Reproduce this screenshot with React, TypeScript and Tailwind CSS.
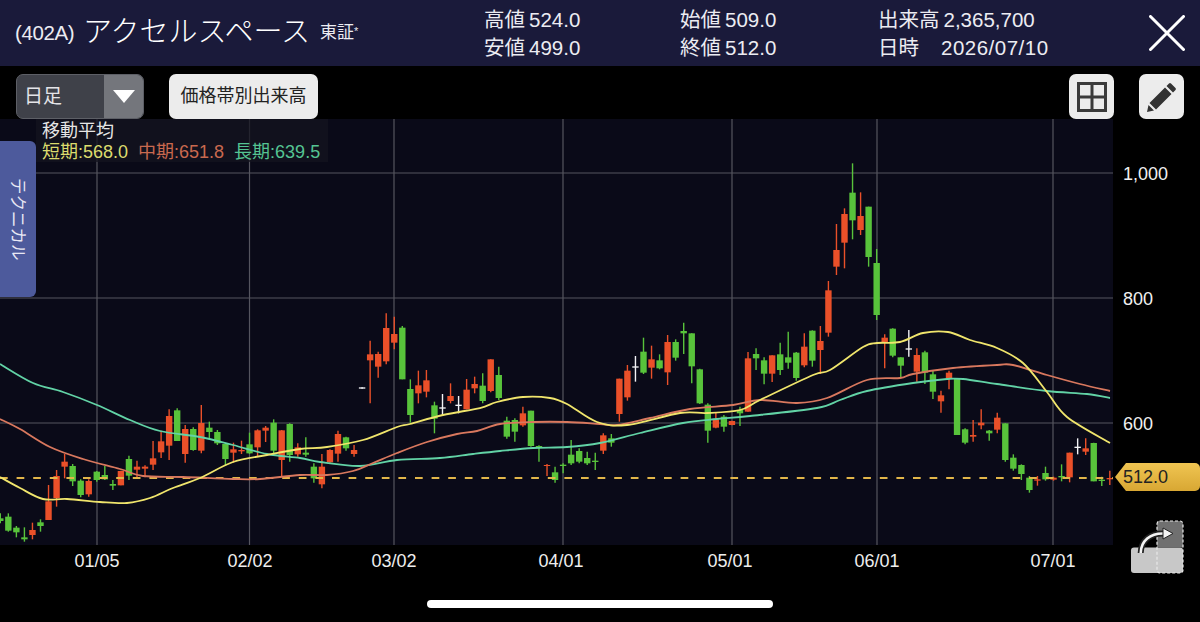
const JP = "font-['Liberation_Sans','Noto_Sans_CJK_JP',sans-serif]";

// [wickTop, bodyTop, bodyBottom, wickBottom, color] in screen px, one entry per trading day
type Candle = [number, number, number, number, "r" | "g" | "w"];

// read off the three chart sections with y = base + z / 3
const z3 = (a: number, b: number, c: number, d: number, k: "r" | "g" | "w"): Candle => [340 + a / 3, 340 + b / 3, 340 + c / 3, 340 + d / 3, k];
const z4 = (a: number, b: number, c: number, d: number, k: "r" | "g" | "w"): Candle => [300 + a / 3, 300 + b / 3, 300 + c / 3, 300 + d / 3, k];
const z5 = (a: number, b: number, c: number, d: number, k: "r" | "g" | "w"): Candle => [150 + a / 3, 150 + b / 3, 150 + c / 3, 150 + d / 3, k];
const z6 = (a: number, b: number, c: number, d: number, k: "r" | "g" | "w"): Candle => [320 + a / 3, 320 + b / 3, 320 + c / 3, 320 + d / 3, k];

const candles: Candle[] = [
  z3(520, 535, 543, 550, "g"), z3(520, 530, 572, 575, "g"), z3(558, 563, 577, 592, "g"), z3(562, 592, 598, 605, "g"),
  z3(548, 570, 585, 598, "r"), z3(538, 547, 558, 575, "g"), z3(435, 484, 540, 540, "r"), z3(390, 408, 474, 500, "r"),
  z3(342, 365, 380, 415, "r"), z3(372, 378, 424, 438, "g"), z3(418, 422, 465, 472, "g"), z3(418, 423, 463, 470, "r"),
  z3(393, 395, 420, 425, "g"), z3(378, 405, 418, 420, "g"), z3(420, 432, 437, 450, "g"), z3(392, 393, 436, 436, "r"),
  z3(347, 357, 407, 420, "g"), z3(362, 380, 389, 412, "r"), z3(376, 380, 386, 412, "r"), z3(303, 355, 374, 390, "r"),
  z3(272, 304, 337, 354, "r"), z3(208, 228, 317, 360, "r"), z3(205, 211, 303, 303, "g"), z3(255, 267, 342, 368, "r"),
  z3(262, 267, 330, 332, "g"), z3(195, 249, 332, 340, "r"), z3(245, 263, 276, 298, "g"), z3(270, 276, 310, 315, "g"),
  z3(310, 312, 357, 378, "g"), z3(308, 328, 338, 368, "r"), z3(302, 330, 334, 342, "r"), z3(278, 313, 340, 342, "g"),
  z3(268, 271, 322, 348, "r"), z3(258, 263, 272, 306, "r"), z3(238, 248, 332, 340, "g"), z3(270, 271, 360, 410, "r"),
  z3(250, 252, 345, 365, "g"), z3(310, 322, 343, 350, "r"),
  z4(412, 458, 464, 470, "g"), z4(490, 500, 535, 548, "g"), z4(462, 500, 553, 565, "r"), z4(448, 450, 487, 488, "r"),
  z4(392, 402, 461, 485, "r"), z4(410, 412, 445, 452, "g"), z4(435, 450, 462, 470, "r"), z4(262, 262, 266, 266, "w"),
  z4(122, 163, 181, 310, "r"), z4(155, 162, 200, 233, "r"), z4(40, 84, 184, 193, "r"), z4(50, 102, 128, 148, "r"),
  z4(78, 83, 238, 238, "g"), z4(238, 267, 345, 368, "g"), z4(212, 256, 280, 310, "r"), z4(210, 241, 275, 292, "r"),
  z4(305, 316, 356, 400, "g"), z4(282, 322, 326, 348, "w"), z4(250, 288, 303, 310, "r"), z4(288, 314, 318, 340, "w"),
  z4(237, 269, 328, 328, "r"), z4(230, 252, 265, 280, "r"), z4(220, 257, 303, 310, "g"), z4(178, 178, 273, 277, "r"),
  z4(200, 225, 294, 300, "g"), z4(350, 362, 410, 416, "g"), z4(355, 360, 395, 425, "g"), z4(320, 340, 376, 380, "r"),
  z4(332, 332, 438, 440, "g"), z4(436, 438, 442, 485, "g"), z4(492, 495, 498, 528, "r"), z4(500, 517, 540, 548, "g"),
  z4(490, 494, 498, 520, "g"), z4(420, 464, 490, 495, "g"), z4(445, 453, 485, 490, "g"), z4(455, 474, 490, 495, "g"),
  z4(458, 482, 486, 510, "g"),
  z5(850, 856, 902, 912, "r"), z5(852, 865, 878, 890, "g"), z5(686, 686, 792, 815, "r"), z5(645, 662, 742, 752, "r"),
  z5(618, 649, 653, 695, "w"), z5(563, 605, 668, 672, "g"), z5(587, 628, 653, 686, "r"), z5(613, 631, 655, 658, "g"),
  z5(555, 576, 667, 705, "r"), z5(568, 576, 623, 632, "g"), z5(518, 543, 550, 612, "g"), z5(550, 550, 649, 700, "g"),
  z5(656, 658, 760, 762, "g"), z5(760, 764, 842, 878, "g"), z5(788, 808, 833, 835, "r"), z5(795, 800, 830, 845, "g"),
  z5(812, 813, 825, 826, "r"), z5(770, 780, 790, 828, "g"), z5(606, 625, 785, 785, "r"), z5(595, 612, 625, 660, "g"),
  z5(622, 631, 671, 703, "g"), z5(616, 616, 671, 696, "r"), z5(578, 613, 660, 675, "g"), z5(545, 622, 638, 656, "g"),
  z5(606, 608, 684, 692, "g"), z5(550, 590, 646, 652, "r"), z5(541, 542, 632, 650, "g"), z5(528, 573, 600, 672, "r"),
  z5(393, 421, 548, 560, "r"), z5(222, 300, 350, 375, "r"), z5(175, 192, 278, 355, "r"), z5(40, 128, 211, 268, "g"),
  z5(127, 198, 240, 255, "r"), z5(170, 170, 321, 350, "g"), z5(297, 339, 495, 510, "g"), z5(553, 563, 578, 655, "r"),
  z5(535, 536, 617, 622, "g"),
  z6(112, 112, 137, 175, "g"), z6(30, 85, 89, 110, "w"), z6(85, 105, 155, 185, "r"), z6(92, 97, 158, 192, "g"),
  z6(150, 163, 215, 237, "g"), z6(212, 226, 244, 278, "r"), z6(152, 158, 175, 208, "r"), z6(177, 177, 345, 345, "g"),
  z6(325, 328, 368, 373, "g"), z6(300, 345, 350, 365, "r"), z6(268, 308, 316, 328, "r"), z6(330, 332, 340, 362, "g"),
  z6(278, 293, 329, 340, "r"), z6(310, 310, 420, 425, "g"), z6(403, 413, 446, 452, "g"), z6(433, 435, 462, 480, "g"),
  z6(468, 473, 510, 518, "g"), z6(468, 478, 482, 497, "r"), z6(440, 459, 478, 482, "g"), z6(470, 473, 479, 482, "r"),
  z6(433, 468, 472, 484, "g"), z6(398, 398, 472, 487, "r"), z6(355, 380, 384, 403, "w"), z6(355, 385, 395, 405, "r"),
  z6(368, 369, 484, 484, "g"), z6(470, 479, 483, 498, "g"), z6(452, 474, 478, 495, "r"),
];

const candleColor = { r: "#ea5029", g: "#58c33b", w: "#f2f2f5" };

const longMa = [[0,364],[33,383],[63,392],[97,405],[130,420],[160,431],[200,437],[233,445],[267,454],[300,458],[320,462],[360,466],[397,460],[440,458],[473,454],[500,451],[533,448],[567,447],[600,443],[640,433],[683,423],[717,419],[750,416],[817,408],[840,400],[867,391],[913,383],[947,379],[963,379],[997,384],[1047,391],[1087,394],[1110,398]];
const midMa = [[0,419],[20,429],[50,447],[83,459],[120,469],[143,476],[183,477],[233,479],[260,479],[300,475],[327,475],[353,471],[373,463],[397,453],[427,442],[457,434],[477,431],[500,424],[533,422],[567,422],[600,424],[617,425],[650,418],[690,409],[733,405],[760,400],[797,403],[827,398],[867,380],[900,378],[913,374],[953,368],[997,365],[1013,365],[1047,375],[1080,384],[1110,391]];
const shortMa = [[0,477],[20,488],[43,499],[67,499],[100,502],[127,503],[150,498],[173,488],[200,478],[233,462],[267,455],[300,449],[327,447],[363,440],[397,427],[410,424],[443,415],[480,408],[497,402],[523,397],[550,398],[567,404],[597,422],[627,425],[680,413],[707,413],[740,410],[760,400],[813,375],[830,370],[863,347],[877,343],[900,342],[923,333],[948,332],[970,340],[997,348],[1023,363],[1047,392],[1067,417],[1110,443]];

// catmull-rom through the read-off points so the averages stay round
function smooth(pts: number[][]) {
  let d = `M${pts[0][0]} ${pts[0][1]}`;
  for (let i = 0; i < pts.length - 1; i++) {
    const p0 = pts[Math.max(i - 1, 0)];
    const p1 = pts[i];
    const p2 = pts[i + 1];
    const p3 = pts[Math.min(i + 2, pts.length - 1)];
    const c1x = p1[0] + (p2[0] - p0[0]) / 6;
    const c1y = p1[1] + (p2[1] - p0[1]) / 6;
    const c2x = p2[0] - (p3[0] - p1[0]) / 6;
    const c2y = p2[1] - (p3[1] - p1[1]) / 6;
    d += `C${c1x} ${c1y} ${c2x} ${c2y} ${p2[0]} ${p2[1]}`;
  }
  return d;
}

const gridX = [97, 249.5, 394, 563, 732, 877, 1053];
const gridY = [173, 298, 423];
const dates = [
  { x: 97, label: "01/05" },
  { x: 250, label: "02/02" },
  { x: 394, label: "03/02" },
  { x: 561, label: "04/01" },
  { x: 730, label: "05/01" },
  { x: 877, label: "06/01" },
  { x: 1053, label: "07/01" },
];
const prices = [
  { y: 174, label: "1,000" },
  { y: 299, label: "800" },
  { y: 424, label: "600" },
];

function Stat({ label, value, gap = "", valueClass = "" }: { label: string; value: string; gap?: string; valueClass?: string }) {
  return (
    <div className="flex h-[28px] items-center whitespace-nowrap">
      <span className={gap}>{label}</span>
      <span className={`ml-[4px] ${valueClass}`}>{value}</span>
    </div>
  );
}

function Chart() {
  return (
    <svg width="1113" height="426" viewBox="0 119 1113 426" className="block">
      {gridX.map((x) => (
        <line key={x} x1={x} x2={x} y1="119" y2="545" stroke="#55555f" strokeWidth="1.2" />
      ))}
      {gridY.map((y) => (
        <line key={y} x1="0" x2="1113" y1={y} y2={y} stroke="#55555f" strokeWidth="1.2" />
      ))}
      {candles.map((c, i) => {
        const x = 0.3 + i * 8.04;
        const color = candleColor[c[4]];
        return (
          <g key={i}>
            <line x1={x} x2={x} y1={c[0]} y2={c[3]} stroke={color} strokeWidth="1.4" />
            <rect x={x - 3.2} y={c[1]} width="6.4" height={c[2] - c[1]} fill={color} />
          </g>
        );
      })}
      <line x1="0" x2="1113" y1="478" y2="478" stroke="#e2b64a" strokeWidth="1.8" strokeDasharray="7.7 8.9" />
      <path d={smooth(longMa)} fill="none" stroke="#62d3a6" strokeWidth="1.8" />
      <path d={smooth(midMa)} fill="none" stroke="#d9785e" strokeWidth="1.8" />
      <path d={smooth(shortMa)} fill="none" stroke="#f0e56c" strokeWidth="1.8" />
    </svg>
  );
}

export default function App() {
  return (
    <div className={`relative h-[622px] w-[1200px] overflow-hidden bg-black text-white ${JP}`}>
      {/* header */}
      <div className="flex h-[66px] items-center bg-[#1a1a3a] pl-[15px] text-[#ececf2]">
        <span className="w-[70px] shrink-0 text-[20.5px] tracking-[-0.4px]">(402A)</span>
        <span className="-ml-[2px] w-[237px] shrink-0 whitespace-nowrap text-[29px] font-light text-white">アクセルスペース</span>
        <span className="w-[164px] shrink-0 text-[17px]">東証<span className="relative -top-[3px] text-[11px]">*</span></span>
        <div className="mt-[2px] w-[196px] shrink-0 text-[20.5px]">
          <Stat label="高値" value="524.0" />
          <Stat label="安値" value="499.0" />
        </div>
        <div className="mt-[2px] w-[198px] shrink-0 text-[20.5px]">
          <Stat label="始値" value="509.0" />
          <Stat label="終値" value="512.0" />
        </div>
        <div className="mt-[2px] w-[240px] shrink-0 text-[20.5px]">
          <Stat label="出来高" value="2,365,700" />
          <Stat label="日時" value="2026/07/10" gap="w-[59px]" valueClass="tracking-[0.5px]" />
        </div>
        <svg width="36" height="36" viewBox="0 0 36 36" className="ml-[31px] shrink-0">
          <path d="M1.5 1.5 34.5 34.5M34.5 1.5 1.5 34.5" stroke="#fff" strokeWidth="3" strokeLinecap="round" />
        </svg>
      </div>

      {/* toolbar */}
      <div className="flex h-[53px] items-start pl-[16px] pr-[16px] pt-[8px]">
        <div className="flex h-[45px] w-[128px] overflow-hidden rounded-[7px] border border-[#5d5f66] bg-[#3f4149]">
          <span className="flex w-[87px] items-center pl-[7px] pt-[2px] text-[19px] text-[#e4e4e8]">日足</span>
          <span className="flex flex-1 items-center justify-center bg-[#74767c]">
            <svg width="22" height="13" viewBox="0 0 22 13"><path d="M0 0h22L11 13z" fill="#fff" /></svg>
          </span>
        </div>
        <button className="ml-[25px] h-[45px] w-[149px] rounded-[7px] bg-[#ececec] text-[18px] text-[#222]">価格帯別出来高</button>
        <button className="ml-auto flex h-[45px] w-[45px] items-center justify-center rounded-[7px] bg-[#ececec]">
          <svg width="30" height="30" viewBox="0 0 30 30" fill="none" stroke="#3a3a3a" strokeWidth="3">
            <rect x="1.5" y="1.5" width="27" height="27" />
            <path d="M15 1.5v27M1.5 15h27" />
          </svg>
        </button>
        <button className="ml-[25px] flex h-[45px] w-[45px] items-center justify-center rounded-[7px] bg-[#ececec]">
          <svg width="32" height="32" viewBox="0 0 32 32" fill="#333">
            <path d="M23 2.5a1.5 1.5 0 0 1 2 0l4.5 4.5a1.5 1.5 0 0 1 0 2L27 11.5 20.5 5zM19 6.5 25.5 13 10 28.5 3.5 22zM2.5 24l5.5 5.5L1 31z" />
          </svg>
        </button>
      </div>

      {/* chart with price axis */}
      <div className="relative flex h-[426px]">
        <div className="w-[1113px] bg-[#0a0a18]">
          <Chart />
        </div>
        {prices.map((p) => (
          <span key={p.label} className="absolute left-[1123px] -translate-y-1/2 text-[18px] text-[#f0f0f0]" style={{ top: p.y - 119 }}>
            {p.label}
          </span>
        ))}

        {/* 移動平均 legend */}
        <div className="absolute left-[36px] top-0 h-[43px] w-[292px] bg-[#14141f]/75 pl-[6px] pt-[2px] leading-[21px]">
          <div className="text-[18px] text-[#e6e6e6]">移動平均</div>
          <div className="whitespace-nowrap text-[18px]">
            <span className="text-[#dcdc6e]">短期:568.0</span>
            <span className="ml-[10px] text-[#c9694f]">中期:651.8</span>
            <span className="ml-[10px] text-[#55c493]">長期:639.5</span>
          </div>
        </div>

        {/* テクニカル tab */}
        <div className="absolute left-0 top-[22px] flex h-[156px] w-[36px] items-center justify-center rounded-r-[6px] bg-[#4d5a9c]">
          <span className="text-[16.5px] text-[#e8e8f4] [text-orientation:sideways] [writing-mode:vertical-rl]">テクニカル</span>
        </div>

        {/* last price tag */}
        <div className="absolute left-[1115px] top-[344px] flex h-[28px] w-[85px] items-center rounded-r-[5px] bg-[linear-gradient(180deg,#f0c552,#d8a733)] pl-[8px] text-[18px] text-[#222] [clip-path:polygon(0_50%,11px_0,100%_0,100%_100%,11px_100%)]">
          512.0
        </div>
      </div>

      {/* date axis */}
      <div className="relative h-[35px]">
        {dates.map((d) => (
          <span key={d.label} className="absolute top-[3px] -translate-x-1/2 text-[18px] text-[#eeeeee]" style={{ left: d.x }}>
            {d.label}
          </span>
        ))}
      </div>

      {/* chart swap button */}
      <svg width="54" height="54" viewBox="0 0 54 54" className="absolute left-[1130px] top-[520px]">
        <rect x="1" y="27.5" width="52" height="25.5" rx="3" fill="#c8c8c8" />
        <path d="M27 27.5V1h23a3 3 0 0 1 3 3v23.5z" fill="#707070" />
        <rect x="27" y="1" width="26" height="52" rx="3" fill="none" stroke="#e8e8e8" strokeWidth="1.2" strokeDasharray="3 2" />
        <path d="M10.7 33C11 21 20 13 34 13.5" fill="none" stroke="#222" strokeWidth="6" />
        <path d="M10.7 33C11 21 20 13 34 13.5" fill="none" stroke="#f4f4f4" strokeWidth="2.6" />
        <path d="M33 8 43 13.5 33 19z" fill="#f4f4f4" stroke="#222" strokeWidth="1" />
      </svg>

      {/* home indicator */}
      <div className="mx-auto mt-[20px] h-[8px] w-[346px] rounded-full bg-white" />
    </div>
  );
}
